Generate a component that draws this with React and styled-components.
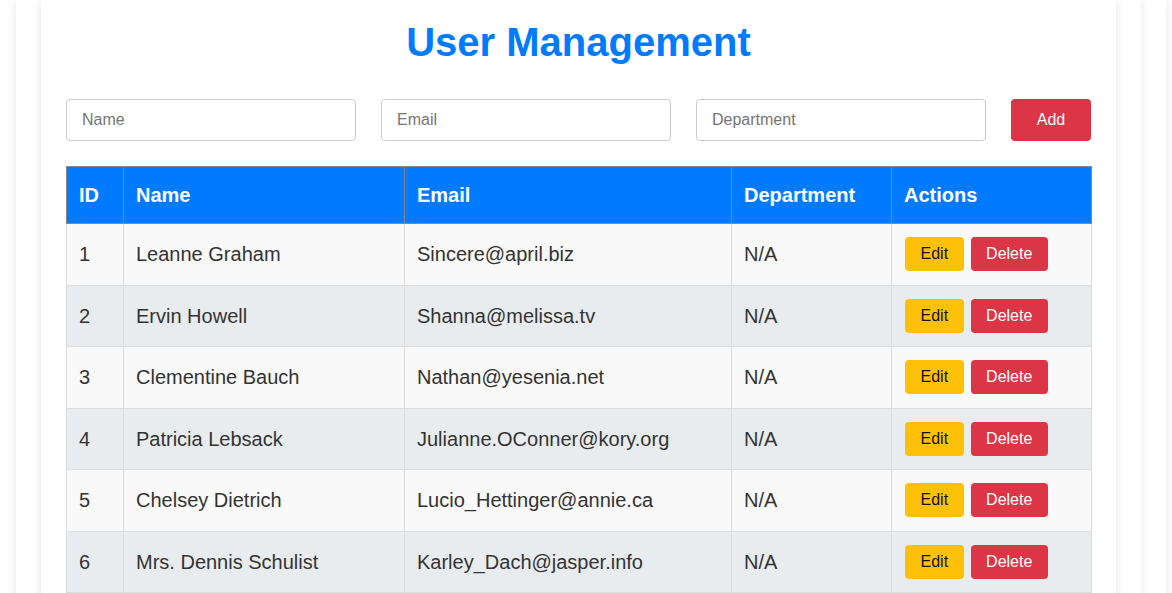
import React from "react";
import styled, { createGlobalStyle } from "styled-components";

const Global = createGlobalStyle`
  html, body { margin: 0; padding: 0; background: #fff; }
  body { font-family: "Liberation Sans", Arial, sans-serif; color: #333; overflow-x: hidden; }
  * { box-sizing: border-box; }
`;

const Page = styled.div`
  width: 100%;
  overflow: hidden;
`;

const Shell = styled.div`
  width: 1175px;
  margin-left: -9px;
  padding: 0 25px;
  background: #fff;
  box-shadow: 0 0 10px rgba(0, 0, 0, 0.1);
`;

const Frame = styled.div`
  padding: 0 25px;
  background: #fff;
  box-shadow: 0 0 10px rgba(0, 0, 0, 0.1);
`;

const Card = styled.div`
  padding: 18px 25px 40px;
  background: #fff;
  box-shadow: 0 0 10px rgba(0, 0, 0, 0.1);
`;

const Title = styled.h1`
  margin: 0 0 33px;
  font-size: 40px;
  line-height: 48px;
  font-weight: 700;
  text-align: center;
  color: #007bff;
`;

const Form = styled.div`
  display: flex;
  gap: 25px;
  margin-bottom: 25px;
`;

const Input = styled.input`
  flex: 1;
  min-width: 0;
  height: 42px;
  padding: 0 15px;
  border: 1px solid #ccc;
  border-radius: 4px;
  font-family: inherit;
  font-size: 16px;
  color: #333;
  &::placeholder { color: #757575; }
`;

const Button = styled.button`
  display: inline-block;
  border: none;
  border-radius: 4px;
  font-family: inherit;
  font-size: 16px;
  cursor: pointer;
  background: ${(p) => (p.$variant === "edit" ? "#ffc107" : "#dc3545")};
  color: ${(p) => (p.$variant === "edit" ? "#111" : "#fff")};
`;

const AddButton = styled(Button)`
  width: 80px;
  height: 42px;
  flex: none;
`;

const RowButton = styled(Button)`
  padding: 5px 15.5px;
  line-height: 24px;
  margin: 0 6px 0 1px;
  vertical-align: middle;
`;

const Table = styled.table`
  width: 100%;
  border-collapse: collapse;
  table-layout: fixed;
  font-size: 20px;
  line-height: 1.5;
`;

const Th = styled.th`
  background: #007bff;
  color: #fff;
  font-weight: 700;
  text-align: left;
  padding: 13px 12px;
  border: 1px solid #888;
`;

const Tr = styled.tr`
  background: ${(p) => (p.$even ? "#e9ecef" : "#f9f9f9")};
`;

const Td = styled.td`
  padding: 13.25px 12px;
  border: 1px solid #ddd;
  vertical-align: middle;
  white-space: nowrap;
  overflow: hidden;
`;

const users = [
  [1, "Leanne Graham", "Sincere@april.biz"],
  [2, "Ervin Howell", "Shanna@melissa.tv"],
  [3, "Clementine Bauch", "Nathan@yesenia.net"],
  [4, "Patricia Lebsack", "Julianne.OConner@kory.org"],
  [5, "Chelsey Dietrich", "Lucio_Hettinger@annie.ca"],
  [6, "Mrs. Dennis Schulist", "Karley_Dach@jasper.info"],
  [7, "Kurtis Weissnat", "Telly.Hoeger@billy.biz"],
  [8, "Nicholas Runolfsdottir V", "Sherwood@rosamond.me"],
  [9, "Glenna Reichert", "Chaim_McDermott@dana.io"],
  [10, "Clementina DuBuque", "Rey.Padberg@karina.biz"],
];

export default function App() {
  return (
    <Page>
      <Global />
      <Shell>
        <Frame>
          <Card>
            <Title>User Management</Title>
            <Form>
              <Input placeholder="Name" />
              <Input placeholder="Email" />
              <Input placeholder="Department" />
              <AddButton>Add</AddButton>
            </Form>
            <Table>
              <colgroup>
                <col style={{ width: 57 }} />
                <col style={{ width: 281 }} />
                <col style={{ width: 327 }} />
                <col style={{ width: 160 }} />
                <col style={{ width: 200 }} />
              </colgroup>
              <thead>
                <tr>
                  <Th>ID</Th>
                  <Th>Name</Th>
                  <Th>Email</Th>
                  <Th>Department</Th>
                  <Th>Actions</Th>
                </tr>
              </thead>
              <tbody>
                {users.map(([id, name, email], i) => (
                  <Tr key={id} $even={i % 2 === 1}>
                    <Td>{id}</Td>
                    <Td>{name}</Td>
                    <Td>{email}</Td>
                    <Td>N/A</Td>
                    <Td>
                      <RowButton $variant="edit">Edit</RowButton>
                      <RowButton $variant="delete">Delete</RowButton>
                    </Td>
                  </Tr>
                ))}
              </tbody>
            </Table>
          </Card>
        </Frame>
      </Shell>
    </Page>
  );
}
